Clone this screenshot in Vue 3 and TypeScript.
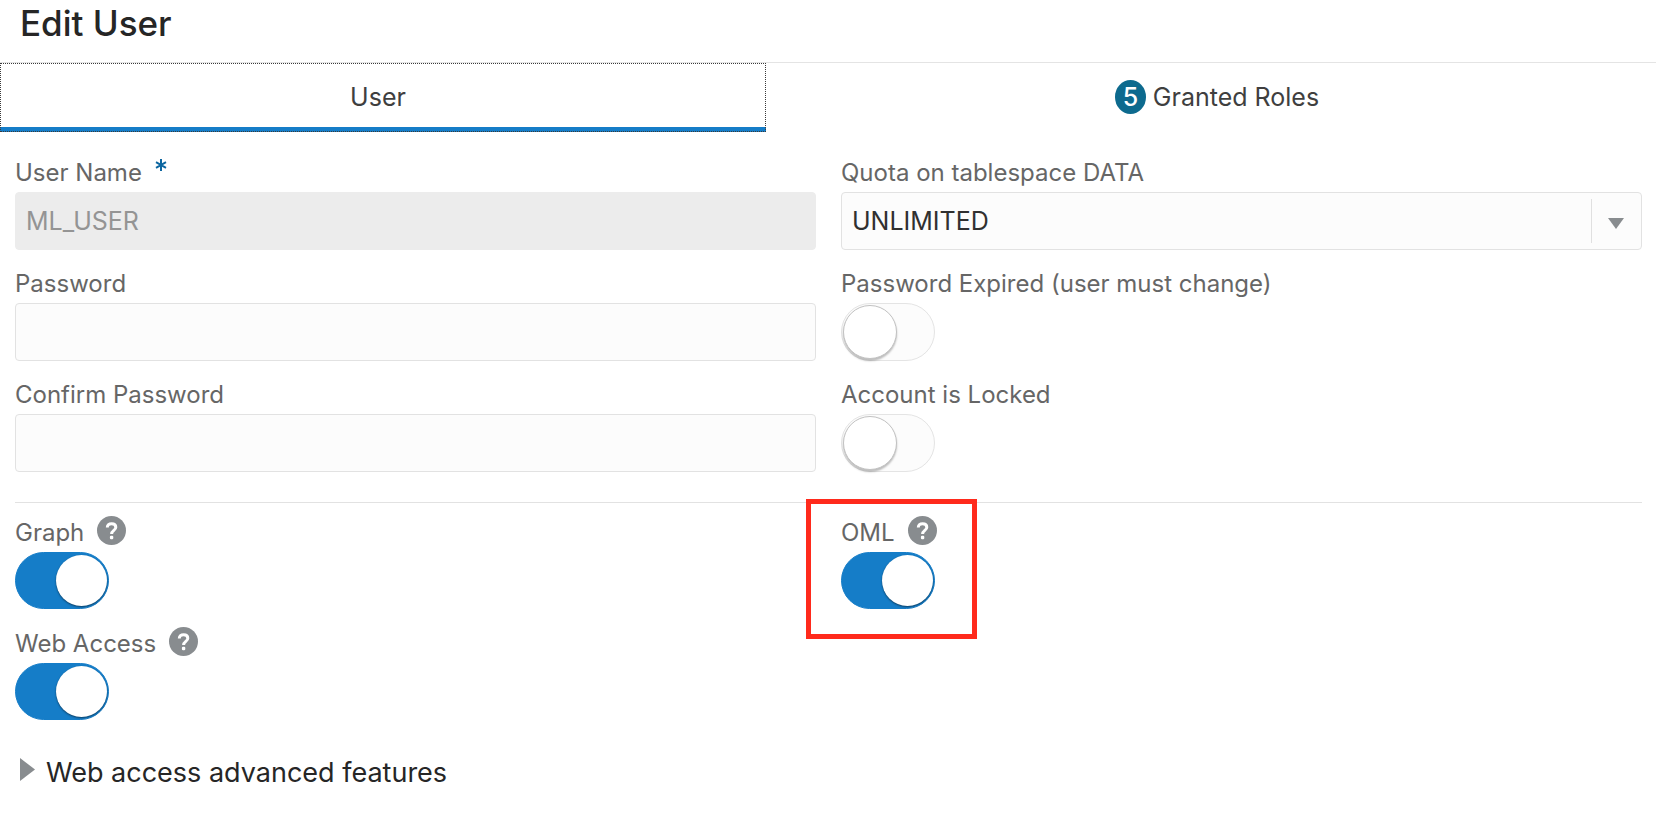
<script setup lang="ts">
import { ref } from 'vue'

const activeTab = ref<'user' | 'roles'>('user')
const userName = ref('ML_USER')
const quota = ref('UNLIMITED')
const password = ref('')
const confirmPassword = ref('')
const passwordExpired = ref(false)
const accountLocked = ref(false)
const grantedRoles = ref(5)

interface Feature {
  id: string
  label: string
  enabled: boolean
  highlighted: boolean
}

const features = ref<Feature[]>([
  { id: 'graph', label: 'Graph', enabled: true, highlighted: false },
  { id: 'oml', label: 'OML', enabled: true, highlighted: true },
  { id: 'web-access', label: 'Web Access', enabled: true, highlighted: false },
])
</script>

<template>
  <main class="page">
    <h1 class="title">Edit User</h1>

    <div class="tabs" role="tablist">
      <button
        class="tab tab-user"
        :class="{ active: activeTab === 'user' }"
        type="button"
        role="tab"
        :aria-selected="activeTab === 'user'"
        @click="activeTab = 'user'"
      >
        User
      </button>
      <button
        class="tab tab-roles"
        :class="{ active: activeTab === 'roles' }"
        type="button"
        role="tab"
        :aria-selected="activeTab === 'roles'"
        @click="activeTab = 'roles'"
      >
        <span class="count">{{ grantedRoles }}</span>
        <span>Granted Roles</span>
      </button>
    </div>

    <form class="form" @submit.prevent>
      <section class="grid">
        <div class="field">
          <div class="label-row">
            <label for="user-name">User Name</label>
            <svg class="required" viewBox="0 0 12 12" aria-hidden="true">
              <path d="M6 0v12M1 3.2l10 5.6M11 3.2L1 8.8" />
            </svg>
          </div>
          <input id="user-name" v-model="userName" class="box" type="text" disabled />
        </div>

        <div class="field">
          <div class="label-row"><label for="quota">Quota on tablespace DATA</label></div>
          <div class="select-wrap">
            <select id="quota" v-model="quota" class="box">
              <option>UNLIMITED</option>
            </select>
            <span class="select-end" aria-hidden="true">
              <svg class="arrow-down" viewBox="0 0 16 11"><path d="M0 0h16L8 11z" /></svg>
            </span>
          </div>
        </div>

        <div class="field">
          <div class="label-row"><label for="password">Password</label></div>
          <input id="password" v-model="password" class="box" type="password" />
        </div>

        <div class="field">
          <div class="label-row"><label for="expired">Password Expired (user must change)</label></div>
          <input id="expired" v-model="passwordExpired" class="switch" type="checkbox" role="switch" />
        </div>

        <div class="field">
          <div class="label-row"><label for="confirm">Confirm Password</label></div>
          <input id="confirm" v-model="confirmPassword" class="box" type="password" />
        </div>

        <div class="field">
          <div class="label-row"><label for="locked">Account is Locked</label></div>
          <input id="locked" v-model="accountLocked" class="switch" type="checkbox" role="switch" />
        </div>
      </section>

      <section class="grid features">
        <div v-for="feature in features" :key="feature.id" class="field">
          <div class="label-row">
            <label :for="feature.id">{{ feature.label }}</label>
            <button class="help" type="button" :aria-label="`Help for ${feature.label}`">
              <svg viewBox="0 0 29 29" aria-hidden="true">
                <circle cx="14.5" cy="14.5" r="14.5" />
                <path d="M10.3 11.6c0-2.5 1.7-3.9 4.3-3.9 2.5 0 4.2 1.3 4.2 3.5 0 3.2-4.2 3.1-4.2 6.8" />
                <rect x="12.9" y="19.8" width="3.4" height="3.4" rx="1.2" />
              </svg>
            </button>
          </div>
          <input :id="feature.id" v-model="feature.enabled" class="switch" type="checkbox" role="switch" />
          <span v-if="feature.highlighted" class="highlight" aria-hidden="true"></span>
        </div>
      </section>

      <details class="advanced">
        <summary>
          <svg class="arrow-right" viewBox="0 0 15 23" aria-hidden="true"><path d="M0 0l15 11.5L0 23z" /></svg>
          <span>Web access advanced features</span>
        </summary>
      </details>
    </form>
  </main>
</template>

<style>
body {
  margin: 0;
  background: #fff;
}
</style>

<style scoped>
.page {
  font-family: Inter, "Liberation Sans", sans-serif;
  font-size: 24px;
}

.page button,
.page input,
.page select {
  font-family: inherit;
  font-size: 25px;
}

.title {
  margin: 0;
  padding: 0 20px;
  height: 62px;
  box-sizing: border-box;
  font-size: 35px;
  font-weight: 500;
  line-height: 46px;
  color: #262626;
}

.tabs {
  display: grid;
  grid-template-columns: 766fr 890fr;
  border-top: 1px solid #e4e4e4;
}

.tab {
  display: flex;
  align-items: center;
  justify-content: center;
  gap: 7px;
  height: 69px;
  padding: 4px 0 0;
  border: 0;
  border-bottom: 5px solid transparent;
  background: #fff;
  color: #3f3f3f;
}

.tab-user {
  padding-right: 10px;
}

.tab-roles {
  padding-left: 12px;
}

.tab.active {
  border-bottom-color: #157dc8;
  outline: 1px dotted #3a3a3a;
  outline-offset: -1px;
}

.count {
  display: flex;
  align-items: center;
  justify-content: center;
  width: 31px;
  height: 34px;
  border-radius: 50%;
  background: #0d6a8e;
  color: #fff;
  font-weight: 500;
}

.form {
  padding: 24px 14px 0 15px;
}

.grid {
  display: grid;
  grid-template-columns: 1fr 1fr;
  column-gap: 25px;
  row-gap: 17px;
}

.field {
  position: relative;
  display: flex;
  flex-direction: column;
}

.label-row {
  display: flex;
  align-items: center;
  gap: 13px;
  height: 36px;
  padding-bottom: 2px;
  box-sizing: border-box;
  line-height: 32px;
  color: #666;
}

.required {
  width: 12px;
  height: 12px;
  margin-bottom: 16px;
  fill: none;
  stroke: #0c66a0;
  stroke-width: 2;
}

.box {
  box-sizing: border-box;
  width: 100%;
  height: 58px;
  padding: 0 10px;
  border: 1px solid #e2e2e2;
  border-radius: 4px;
  background: #fcfcfc;
  color: #303030;
  appearance: none;
}

.box:disabled {
  border-color: #ececec;
  background: #ececec;
  color: #949494;
}

.select-wrap {
  position: relative;
}

.select-end {
  position: absolute;
  top: 7px;
  right: 0;
  bottom: 7px;
  display: flex;
  align-items: center;
  justify-content: center;
  width: 51px;
  padding-right: 2px;
  box-sizing: border-box;
  border-left: 1px solid #e0e0e0;
  pointer-events: none;
}

.arrow-down {
  width: 16px;
  height: 11px;
  margin-top: 4px;
  fill: #888c8f;
}

.switch {
  display: flex;
  align-items: center;
  box-sizing: border-box;
  width: 94px;
  height: 58px;
  margin: 0;
  padding: 0 1px;
  border: 1px solid #e4e4e4;
  border-radius: 29px;
  background: #fcfcfc;
  appearance: none;
}

.switch::before {
  content: "";
  box-sizing: border-box;
  width: 54px;
  height: 54px;
  border: 1px solid #c2c2c2;
  border-radius: 50%;
  background: #fff;
  box-shadow: 0 2px 2px rgba(0, 0, 0, 0.25);
}

.switch:checked {
  justify-content: flex-end;
  height: 57px;
  border-color: #157dc8;
  background: #157dc8;
}

.switch:checked::before {
  width: 51px;
  height: 51px;
  border: 0;
  box-shadow: 0 1px 2px rgba(0, 0, 0, 0.5);
}

.features {
  row-gap: 18px;
  margin-top: 30px;
  padding-top: 13px;
  border-top: 1px solid #e2e2e2;
}

.help {
  display: flex;
  width: 29px;
  height: 29px;
  margin-bottom: 5px;
  padding: 0;
  border: 0;
  border-radius: 50%;
  background: none;
}

.help svg {
  width: 29px;
  height: 29px;
}

.help circle {
  fill: #888c8f;
}

.help path {
  fill: none;
  stroke: #fff;
  stroke-width: 3;
}

.help rect {
  fill: #fff;
}

.highlight {
  position: absolute;
  top: -17px;
  left: -35px;
  box-sizing: border-box;
  width: 171px;
  height: 140px;
  border: 5px solid #ff2a1c;
  pointer-events: none;
}

.advanced {
  margin-top: 35px;
}

.advanced summary {
  display: flex;
  align-items: center;
  gap: 11px;
  padding-left: 5px;
  list-style: none;
  font-size: 27px;
  line-height: 36px;
  color: #262626;
}

.arrow-right {
  width: 15px;
  height: 23px;
  margin-bottom: 8px;
  fill: #888c8f;
}
</style>
